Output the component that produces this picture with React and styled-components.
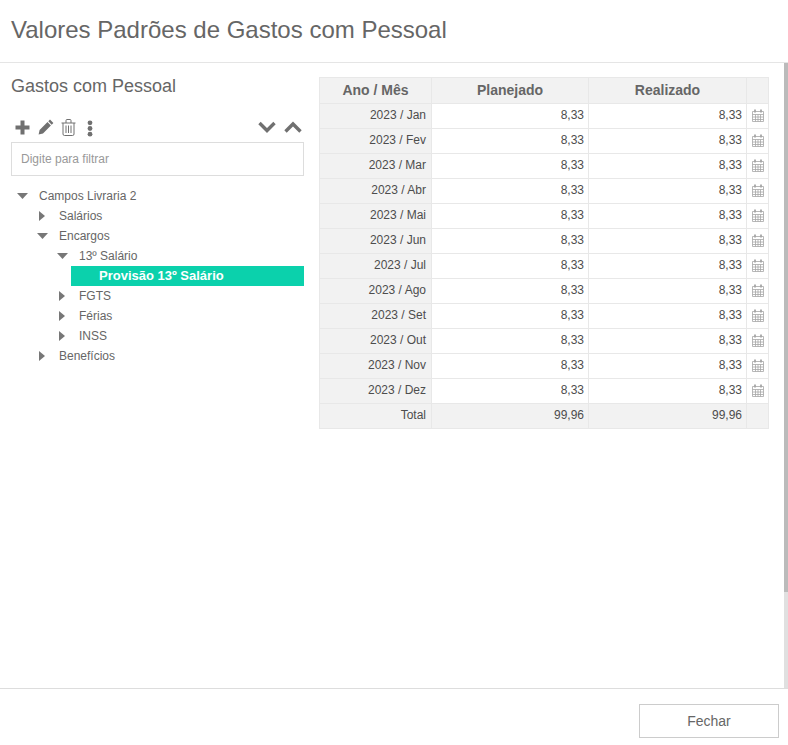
import React from 'react';
import styled, { createGlobalStyle } from 'styled-components';

const months = ['Jan', 'Fev', 'Mar', 'Abr', 'Mai', 'Jun', 'Jul', 'Ago', 'Set', 'Out', 'Nov', 'Dez'];

const treeData = [
  { label: 'Campos Livraria 2', level: 0, state: 'open' },
  { label: 'Salários', level: 1, state: 'closed' },
  { label: 'Encargos', level: 1, state: 'open' },
  { label: '13º Salário', level: 2, state: 'open' },
  { label: 'Provisão 13º Salário', level: 3, state: 'leaf', selected: true },
  { label: 'FGTS', level: 2, state: 'closed' },
  { label: 'Férias', level: 2, state: 'closed' },
  { label: 'INSS', level: 2, state: 'closed' },
  { label: 'Benefícios', level: 1, state: 'closed' },
];

const GlobalStyle = createGlobalStyle`
  html, body {
    margin: 0;
    padding: 0;
    background: #fff;
    overflow: hidden;
  }
  * { box-sizing: border-box; }
  body {
    font-family: "Liberation Sans", Arial, sans-serif;
    color: #666;
  }
`;

const Modal = styled.div`
  width: 788px;
  height: 745px;
  display: flex;
  flex-direction: column;
  background: #fff;
`;

const Header = styled.header`
  height: 63px;
  padding: 16px 11px 0;
  border-bottom: 1px solid #e5e5e5;
  flex: none;
`;

const Title = styled.h1`
  margin: 0;
  font-size: 24px;
  line-height: 28px;
  font-weight: 400;
  color: #666;
`;

const Body = styled.main`
  flex: 1;
  display: flex;
  position: relative;
  min-height: 0;
`;

const ScrollTrack = styled.div`
  position: absolute;
  top: 0;
  right: 0;
  width: 4px;
  height: 100%;
  background: #e0e0e0;
`;

const ScrollThumb = styled.div`
  height: 529px;
  background: #bbb;
`;

const LeftPane = styled.section`
  width: 319px;
  padding: 12px 15px 0 11px;
  flex: none;
`;

const SectionTitle = styled.h2`
  margin: 0;
  font-size: 18px;
  line-height: 22px;
  font-weight: 400;
  color: #666;
`;

const Toolbar = styled.div`
  display: flex;
  align-items: center;
  justify-content: space-between;
  height: 24px;
  margin-top: 18px;
  padding: 0 2px 0 4px;
`;

const ToolGroup = styled.div`
  display: flex;
  align-items: center;
  gap: ${(p) => p.$gap}px;
`;

const FilterInput = styled.input`
  display: block;
  width: 293px;
  height: 34px;
  margin-top: 3px;
  padding: 0 9px;
  border: 1px solid #ddd;
  outline: none;
  font-family: inherit;
  font-size: 12px;
  color: #666;

  &::placeholder {
    color: #999;
    opacity: 1;
  }
`;

const Tree = styled.ul`
  list-style: none;
  margin: 10px 0 0;
  padding: 0;
`;

const TreeRow = styled.li`
  display: flex;
  align-items: center;
  height: 20px;
  margin-left: ${(p) => p.$level * 20}px;
  font-size: 12px;
  color: #666;
`;

const Caret = styled.span`
  width: 28px;
  padding-left: ${(p) => (p.$state === 'open' ? 6 : 8)}px;
  display: flex;
  flex: none;
  align-items: center;
`;

const SelectedLabel = styled.span`
  flex: 1;
  height: 20px;
  line-height: 20px;
  margin-left: -28px;
  padding-left: 28px;
  background: #0bd1ac;
  color: #fff;
  font-size: 13px;
  font-weight: 700;
`;

const TablePane = styled.section`
  width: 450px;
  padding-top: 14px;
  flex: none;
`;

const Grid = styled.table`
  width: 449px;
  border-collapse: collapse;
  table-layout: fixed;
  font-size: 12px;
`;

const HeadCell = styled.th`
  height: 26px;
  padding: 0 0 2px;
  border: 1px solid #e8e8e8;
  background: #f2f2f2;
  font-size: 14px;
  font-weight: 700;
  color: #666;
  text-align: center;
`;

const Cell = styled.td`
  height: 25px;
  padding: 0 4px 2px;
  padding-right: ${(p) => (p.$label ? 5 : 4)}px;
  border: 1px solid #e8e8e8;
  text-align: right;
  color: #4d4d4d;
  background: ${(p) => (p.$muted ? '#f2f2f2' : '#fff')};
`;

const IconCell = styled(Cell)`
  padding: 2px 0 0;
  text-align: center;
`;

const Footer = styled.footer`
  height: 57px;
  flex: none;
  display: flex;
  justify-content: flex-end;
  padding: 15px 9px 0 0;
  border-top: 1px solid #ddd;
`;

const CloseButton = styled.button`
  width: 140px;
  height: 34px;
  border: 1px solid #ccc;
  background: #fff;
  font-family: inherit;
  font-size: 14px;
  color: #666;
`;

const PlusIcon = () => (
  <svg width="15" height="15" viewBox="0 0 15 15">
    <path d="M5.500 0.500h4v5h5v4h-5v5h-4v-5h-5v-4h5z" fill="#707070" />
  </svg>
);

const PencilIcon = () => (
  <svg width="16" height="16" viewBox="0 0 16 16">
    <path d="M12 .6l3.400 3.400-1.700 1.700-3.400-3.400zM9.500 3.100l3.400 3.400-7.900 7.900-4.400 1 1-4.400z" fill="#707070" />
  </svg>
);

const TrashIcon = () => (
  <svg width="15" height="17" viewBox="0 0 15 17" fill="none" stroke="#707070">
    <path d="M.5 4h14M2 4v11a1.500 1.500 0 0 0 1.500 1.500h8A1.500 1.500 0 0 0 13 15V4M5 4V1.500a1 1 0 0 1 1-1h3a1 1 0 0 1 1 1V4M5 6.500v7.500M7.500 6.500v7.500M10 6.500v7.500" />
  </svg>
);

const DotsIcon = () => (
  <svg width="6" height="17" viewBox="0 0 6 17">
    <circle cx="3" cy="2.800" r="2.400" fill="#707070" />
    <circle cx="3" cy="8.500" r="2.400" fill="#707070" />
    <circle cx="3" cy="14.200" r="2.400" fill="#707070" />
  </svg>
);

const TrashSlot = styled.span`
  display: flex;
  margin-left: -1px;
`;

const DotsSlot = styled.span`
  display: flex;
  margin-left: 3px;
  padding-top: 2px;
`;

const ChevronIcon = ({ up }) => (
  <svg width="18" height="12" viewBox="0 0 18 12">
    <path d={up ? 'M1.500 10.500L9 3l7.500 7.500' : 'M1.500 2L9 9.500 16.500 2'} fill="none" stroke="#707070" strokeWidth="3.400" />
  </svg>
);

const CaretIcon = ({ state }) => {
  if (state === 'leaf') return null;
  return state === 'open' ? (
    <svg width="11" height="6" viewBox="0 0 11 6"><path d="M0 0h11L5.500 6z" fill="#777" /></svg>
  ) : (
    <svg width="6" height="10" viewBox="0 0 6 10"><path d="M0 0l6 5-6 5z" fill="#777" /></svg>
  );
};

const CalendarIcon = () => (
  <svg width="12" height="13" viewBox="0 0 12 13" fill="none" stroke="#a6a6a6">
    <path d="M.5 2.500h11v10H.5zM.5 5.500h11M.5 8h11M.5 10.500h11M3.500 5.500v7M6 5.500v7M8.500 5.500v7" strokeWidth="0.800" />
    <path d="M3 .5v3M9 .5v3" strokeWidth="1.800" />
  </svg>
);

export default function App() {
  return (
    <>
      <GlobalStyle />
      <Modal>
        <Header>
          <Title>Valores Padrões de Gastos com Pessoal</Title>
        </Header>
        <Body>
          <LeftPane>
            <SectionTitle>Gastos com Pessoal</SectionTitle>
            <Toolbar>
              <ToolGroup $gap={8}>
                <PlusIcon />
                <PencilIcon />
                <TrashSlot><TrashIcon /></TrashSlot>
                <DotsSlot><DotsIcon /></DotsSlot>
              </ToolGroup>
              <ToolGroup $gap={8}>
                <ChevronIcon />
                <ChevronIcon up />
              </ToolGroup>
            </Toolbar>
            <FilterInput placeholder="Digite para filtrar" />
            <Tree>
              {treeData.map((node) => (
                <TreeRow key={node.label} $level={node.level}>
                  <Caret $state={node.state}>
                    <CaretIcon state={node.state} />
                  </Caret>
                  {node.selected ? <SelectedLabel>{node.label}</SelectedLabel> : node.label}
                </TreeRow>
              ))}
            </Tree>
          </LeftPane>
          <TablePane>
            <Grid>
              <colgroup>
                <col style={{ width: 112 }} />
                <col style={{ width: 157 }} />
                <col style={{ width: 158 }} />
                <col style={{ width: 22 }} />
              </colgroup>
              <thead>
                <tr>
                  <HeadCell>Ano / Mês</HeadCell>
                  <HeadCell>Planejado</HeadCell>
                  <HeadCell>Realizado</HeadCell>
                  <HeadCell />
                </tr>
              </thead>
              <tbody>
                {months.map((month) => (
                  <tr key={month}>
                    <Cell $muted $label>2023 / {month}</Cell>
                    <Cell>8,33</Cell>
                    <Cell>8,33</Cell>
                    <IconCell><CalendarIcon /></IconCell>
                  </tr>
                ))}
                <tr>
                  <Cell $muted $label>Total</Cell>
                  <Cell $muted>99,96</Cell>
                  <Cell $muted>99,96</Cell>
                  <Cell $muted />
                </tr>
              </tbody>
            </Grid>
          </TablePane>
          <ScrollTrack><ScrollThumb /></ScrollTrack>
        </Body>
        <Footer>
          <CloseButton>Fechar</CloseButton>
        </Footer>
      </Modal>
    </>
  );
}
